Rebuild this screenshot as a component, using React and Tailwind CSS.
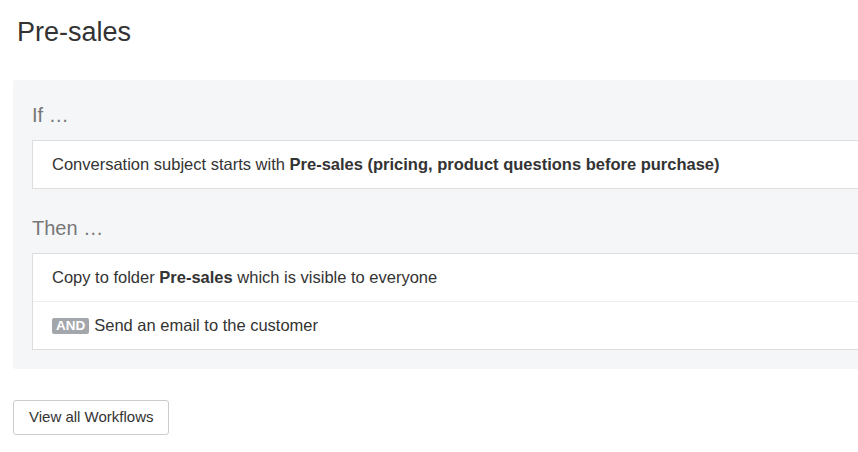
export default function App() {
  return (
    <div className="w-[858px] h-[452px] overflow-hidden bg-white text-[#333] font-['Liberation_Sans',Arial,sans-serif]">
      <h1 className="pl-[17px] pt-[15px] text-[27px] leading-[34px] font-normal">Pre-sales</h1>

      <div className="ml-[13px] mt-[31px] w-[900px] bg-[#f5f6f7] rounded-[3px] pl-[19px] pt-[20px] pb-[19px]">
        <h3 className="text-[20px] leading-[30px] text-[#777] font-normal">If …</h3>
        <div className="mt-[10px] bg-white border border-[#ddd] h-[49px] flex items-center pl-[19px] text-[16.5px]">
          <span>
            Conversation subject starts with{' '}
            <b className="font-bold">Pre-sales (pricing, product questions before purchase)</b>
          </span>
        </div>

        <h3 className="mt-[24px] text-[20px] leading-[30px] text-[#777] font-normal">Then …</h3>
        <div className="mt-[10px] bg-white border border-[#ddd]">
          <div className="h-[48px] flex items-center pl-[19px] text-[16.5px] border-b border-[#eee]">
            <span>
              Copy to folder <b className="font-bold">Pre-sales</b> which is visible to everyone
            </span>
          </div>
          <div className="h-[47px] flex items-center pl-[19px] text-[16.5px]">
            <span className="inline-flex items-center h-[16px] px-[4px] mr-[5px] rounded-[2px] bg-[#a3a7ab] text-white text-[13.5px] font-bold leading-none">
              AND
            </span>
            <span>Send an email to the customer</span>
          </div>
        </div>
      </div>

      <button className="ml-[13px] mt-[31px] h-[35px] px-[15px] bg-white border border-[#ccc] rounded-[3px] text-[15px] text-[#333]">
        View all Workflows
      </button>
    </div>
  );
}
